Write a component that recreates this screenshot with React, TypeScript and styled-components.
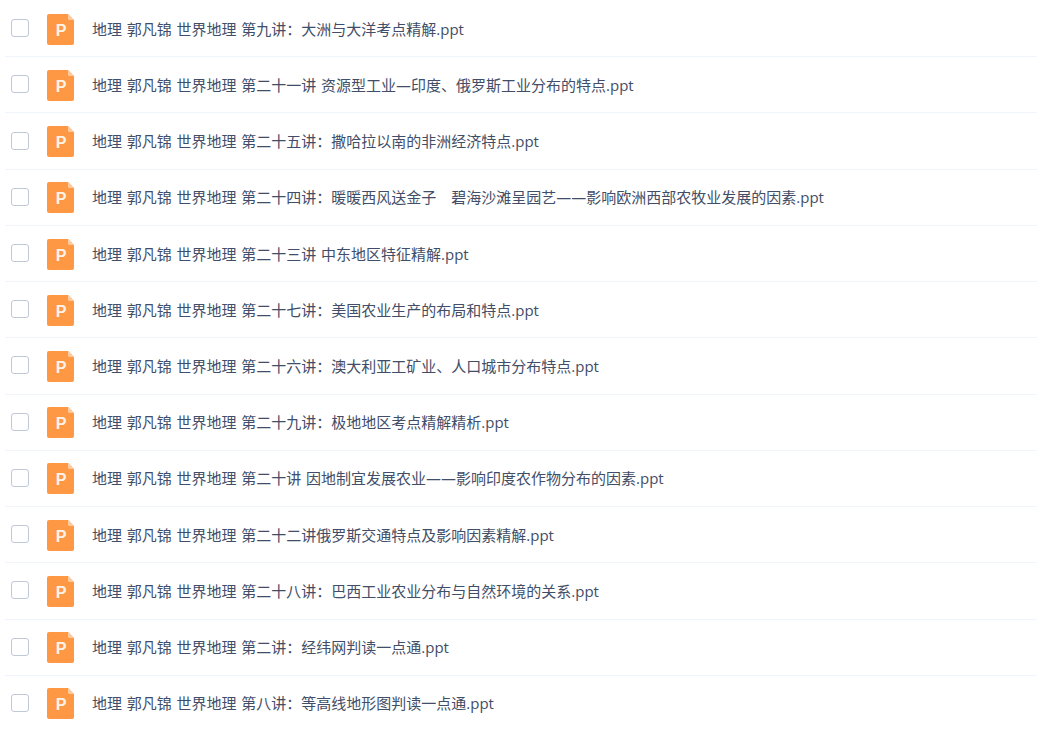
import React from "react";
import styled, { createGlobalStyle } from "styled-components";

const GlobalStyle = createGlobalStyle`
  * { box-sizing: border-box; }
  body { margin: 0; background: #fff; }
`;

const FileList = styled.ul`
  display: grid;
  grid-auto-rows: minmax(56px, 1fr);
  min-height: 100vh;
  margin: 0;
  padding: 1px 0 6px 5px;
  list-style: none;
`;

const FileRow = styled.li`
  border-bottom: 1px solid #f0f4fc;
  &:last-child { border-bottom-color: transparent; }
`;

const FileLabel = styled.label`
  display: flex;
  align-items: center;
  height: 100%;
  padding: 1px 16px 0 6px;
  cursor: pointer;
`;

const Checkbox = styled.input`
  appearance: none;
  flex: none;
  width: 18px;
  height: 18px;
  margin: 0 18px 2px 0;
  border: 1px solid #c0c9d8;
  border-radius: 3px;
  background: #fff;
  &:checked { background: #ff9845; border-color: #ff9845; }
`;

const Icon = styled.svg`
  flex: none;
  width: 27px;
  height: 31px;
  margin: 0 18px 0 0;
`;

const IconLetter = styled.text`
  fill: #fff4e9;
  font: 700 16px "Liberation Sans", Arial, sans-serif;
  text-anchor: middle;
`;

const FileName = styled.span`
  color: #424e67;
  font: 400 15px/20px "DejaVu Sans", "Noto Sans CJK SC", sans-serif;
  white-space: nowrap;
`;

const Extension = styled.span`
  font-family: "Open Sans", "Noto Sans", sans-serif;
`;

const SlidesIcon = () => (
  <Icon viewBox="0 0 27 31" aria-hidden="true">
    <path d="M2 0H21L27 6V29Q27 31 25 31H2Q0 31 0 29V2Q0 0 2 0Z" fill="#ff9845" />
    <path d="M21 0L27 6H22.500Q21 6 21 4.500Z" fill="#ffcb9f" />
    <IconLetter x="14" y="22">P</IconLetter>
  </Icon>
);

const lectures = [
  "第九讲：大洲与大洋考点精解",
  "第二十一讲 资源型工业—印度、俄罗斯工业分布的特点",
  "第二十五讲：撒哈拉以南的非洲经济特点",
  "第二十四讲：暖暖西风送金子　碧海沙滩呈园艺——影响欧洲西部农牧业发展的因素",
  "第二十三讲 中东地区特征精解",
  "第二十七讲：美国农业生产的布局和特点",
  "第二十六讲：澳大利亚工矿业、人口城市分布特点",
  "第二十九讲：极地地区考点精解精析",
  "第二十讲 因地制宜发展农业——影响印度农作物分布的因素",
  "第二十二讲俄罗斯交通特点及影响因素精解",
  "第二十八讲：巴西工业农业分布与自然环境的关系",
  "第二讲：经纬网判读一点通",
  "第八讲：等高线地形图判读一点通",
];

export default function App() {
  return (
    <>
      <GlobalStyle />
      <FileList lang="zh-CN">
        {lectures.map((lecture) => (
          <FileRow key={lecture}>
            <FileLabel>
              <Checkbox type="checkbox" />
              <SlidesIcon />
              <FileName>
                {`地理 郭凡锦 世界地理 ${lecture}`}
                <Extension>.ppt</Extension>
              </FileName>
            </FileLabel>
          </FileRow>
        ))}
      </FileList>
    </>
  );
}
